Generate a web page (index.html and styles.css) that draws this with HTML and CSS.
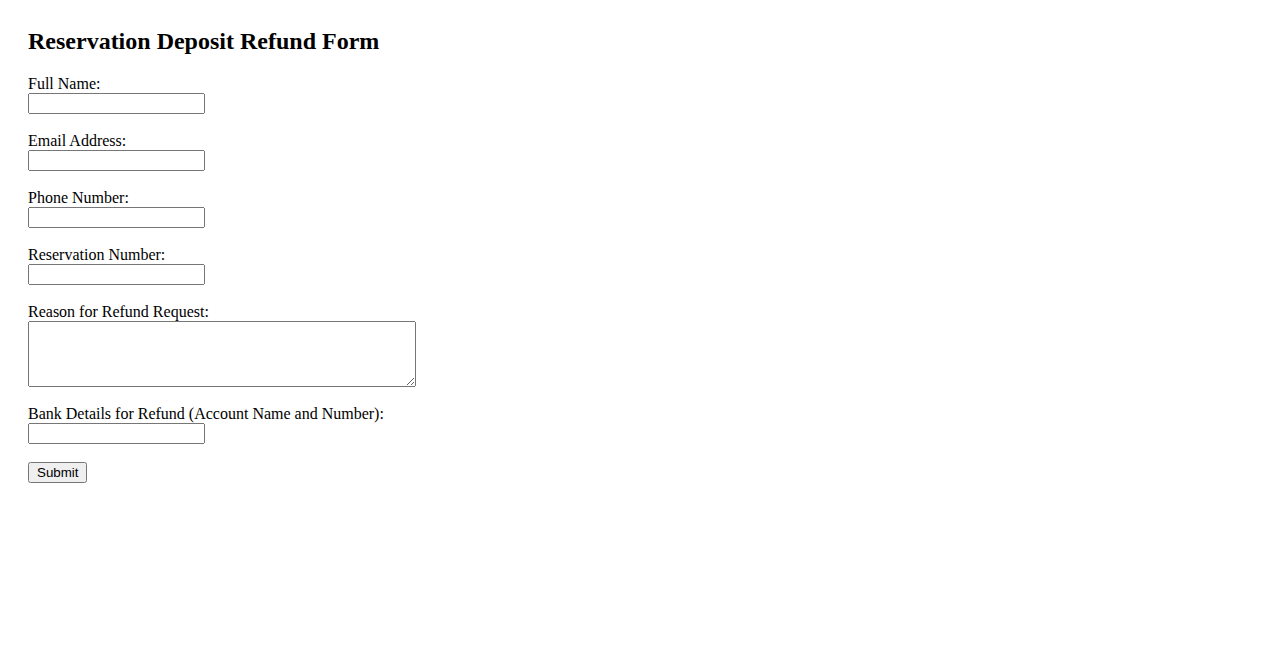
FILE: index.html
```html
<!DOCTYPE html>
<html lang="en">
<head>
    <meta charset="UTF-8">
    <meta name="viewport" content="width=device-width, initial-scale=1.0">
    <title>Reservation Deposit Refund Form</title>
    <link rel="stylesheet" href="styles.css">
</head>
<body>

    <div class="container">
        <h2>Reservation Deposit Refund Form</h2>
        <form id="refund-form">
            <label for="full-name">Full Name:</label><br>
            <input type="text" id="full-name" name="full-name" required><br><br>

            <label for="email">Email Address:</label><br>
            <input type="email" id="email" name="email" required><br><br>

            <label for="phone">Phone Number:</label><br>
            <input type="tel" id="phone" name="phone" required><br><br>

            <label for="reservation">Reservation Number:</label><br>
            <input type="text" id="reservation" name="reservation" required><br><br>

            <label for="reason">Reason for Refund Request:</label><br>
            <textarea id="reason" name="reason" rows="4" cols="50" required></textarea><br><br>

            <label for="bank">Bank Details for Refund (Account Name and Number):</label><br>
            <input type="text" id="bank" name="bank" required><br><br>

            <button type="submit">Submit</button>
        </form>
    </div>

</body>
</html>
```

FILE: styles.css
```css
body {
    font-family: "Liberation Serif", "Times New Roman", serif;
    margin: 8px;
}
.container {
    padding: 20px;
}
h2 {
    margin-top: 0;
}
input, textarea {
    font-family: "Liberation Mono", monospace;
}
input {
    width: 169px;
}
textarea {
    width: 382px;
    height: 60px;
    vertical-align: bottom;
}
button {
    font-family: "Liberation Sans", Arial, sans-serif;
    padding: 1px 7px;
}
```
